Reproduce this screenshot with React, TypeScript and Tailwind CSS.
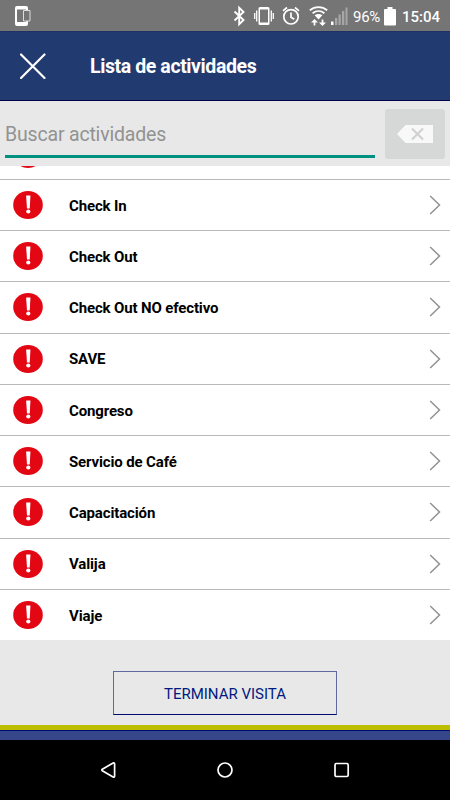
const ACTIVITIES = [
  "",
  "Check In",
  "Check Out",
  "Check Out NO efectivo",
  "SAVE",
  "Congreso",
  "Servicio de Café",
  "Capacitación",
  "Valija",
  "Viaje",
];

function StatusBar() {
  return (
    <div className="flex h-[31px] shrink-0 items-center bg-[#757575] text-white">
      <svg className="ml-3.5 h-[22px] w-[18px]" viewBox="0 0 18 22" fill="none">
        <path fillRule="evenodd" fill="#fff" d="M3 1h9a2 2 0 0 1 2 2v16a2 2 0 0 1-2 2H3a2 2 0 0 1-2-2V3a2 2 0 0 1 2-2zM3 4.500v12.500h9V4.500z" />
        <path fill="#757575" stroke="#ddd" d="M9.500 5.500h6.500v10.500H9.500z" />
      </svg>
      <div className="flex-1" />

      {/* bluetooth */}
      <svg className="h-[22px] w-[14px]" viewBox="0 0 14 22" fill="none" stroke="#fff" strokeWidth="1.900">
        <path d="M2.500 6.500l9 8.500-4.300 4.300V2.700L11.500 7l-9 8.500" />
      </svg>
      {/* vibrate */}
      <svg className="ml-2 h-[22px] w-[20px]" viewBox="0 0 20 22" fill="none" stroke="#fff">
        <path fillRule="evenodd" fill="#fff" stroke="none" d="M6 2h8a1.500 1.500 0 0 1 1.500 1.500v15a1.500 1.500 0 0 1-1.500 1.500H6A1.500 1.500 0 0 1 4.500 18.500v-15A1.500 1.500 0 0 1 6 2zM6 4.500v13h8v-13z" />
        <path strokeWidth="1.300" d="M2.700 5.500v11M17.300 5.500v11M.7 8v6M19.300 8v6" />
      </svg>
      {/* alarm */}
      <svg className="ml-2 h-[22px] w-[18px]" viewBox="0 0 18 22" fill="none" stroke="#fff" strokeWidth="1.700">
        <circle cx="9" cy="11.800" r="7.200" />
        <path d="M1 5.800l4-3.300M17 5.800l-4-3.300M9 7.500v4.700l3.300 2" />
      </svg>
      {/* wifi */}
      <svg className="ml-[9px] h-[22px] w-[19px]" viewBox="0 0 19 22" fill="none" stroke="#fff" strokeWidth="1.800">
        <path d="M.8 5.200c5-4.200 12.400-4.200 17.400 0M3.600 8.300c3.500-2.900 8.300-2.900 11.800 0" />
        <path fill="#fff" stroke="none" d="M5.600 10.300c2.300-1.800 5.500-1.800 7.800 0L9.500 14.600z" />
        <path strokeWidth="1.700" d="M5.500 20.500v-4M13.500 14.500v4" />
        <path fill="#fff" stroke="none" d="M5.500 14L9 17.600H2zM13.500 21l3.500-3.600h-7z" />
      </svg>
      {/* signal */}
      <svg className="ml-0.5 h-[22px] w-[18px]" viewBox="0 0 18 22">
        <path fill="#fff" d="M1 16.500h2.500V20H1z" />
        <path fill="#a6a6a6" d="M5 13h2.300v7H5zM8.500 9.500h2.300V20H8.500zM12 6h2.300v14H12zM15.500 2.500h2V20h-2z" />
      </svg>
      <span className="ml-[5px] w-[28px] whitespace-nowrap pt-0.5 text-[15px] leading-5 tracking-[-0.3px]">96%</span>
      {/* battery */}
      <svg className="ml-[3px] h-[20px] w-[12px]" viewBox="0 0 12 20">
        <path fill="#fff" d="M3.500 1h5v2H11a1 1 0 0 1 1 1v14.500a1 1 0 0 1-1 1H1a1 1 0 0 1-1-1V4a1 1 0 0 1 1-1h2.500z" />
      </svg>
      <span className="ml-[6px] mr-[10px] w-[38px] whitespace-nowrap pt-0.5 text-[15px] font-medium leading-5">15:04</span>
    </div>
  );
}

function Header() {
  return (
    <header className="flex h-[70px] shrink-0 items-center border-y border-t-[#1c3268] border-b-[#00004d] bg-[#213a70] text-white">
      <svg className="ml-5 h-[26px] w-[26px]" viewBox="0 0 26 26" stroke="#fff" strokeWidth="2.200" strokeLinecap="round">
        <path d="M1 1.500l23.500 23.500M24.500 1.500L1 25" />
      </svg>
      <h1 className="ml-11 pt-0.5 text-[19.5px] font-bold tracking-[-0.4px]">Lista de actividades</h1>
    </header>
  );
}

function SearchBar() {
  return (
    <div className="flex h-[65px] shrink-0 gap-2.5 px-[5px] pt-2">
      <div className="flex h-[49px] flex-1 items-center border-b-[3px] border-[#009180] pt-[5px] text-[19.5px] tracking-[-0.18px] text-[#929292]">
        Buscar actividades
      </div>
      <button className="flex h-[50px] w-[60px] items-center justify-center rounded-[3px] bg-[#d6d8d7]">
        <svg className="h-[18px] w-[36px]" viewBox="0 0 36 18">
          <path fill="#f8f8f8" d="M0 9L8.500 0H36v18H8.500z" />
          <path stroke="#d0d2d1" strokeWidth="2.200" d="M15 3.500l11 11M26 3.500l-11 11" />
        </svg>
      </button>
    </div>
  );
}

function ActivityRow({ name }: { name: string }) {
  return (
    <li className="flex h-[51.25px] shrink-0 items-center border-t border-[#b9b9b9] bg-white">
      <svg className="ml-[13px] h-[28px] w-[30px]" viewBox="0 0 30 28">
        <ellipse cx="15" cy="14" rx="14.800" ry="14" fill="#e30613" />
        <path fill="#fff" d="M13.200 4.500h4.200v1.500l-.7 11.500h-2.700l-.8-11.500z" />
        <ellipse cx="15.300" cy="20.500" rx="2.100" ry="1.900" fill="#fff" />
      </svg>
      <span className="ml-[26px] flex-1 pt-0.5 text-[15px] font-bold tracking-[-0.14px] text-black">{name}</span>
      <svg className="mr-[9px] h-5 w-3" viewBox="0 0 12 20" fill="none" stroke="#929292" strokeWidth="1.500">
        <path d="M1.200 1l9.300 9-9.300 9" />
      </svg>
    </li>
  );
}

function NavBar() {
  return (
    <nav className="flex h-[60px] shrink-0 items-center justify-center gap-[99px] bg-black">
      <svg className="h-[18px] w-[18px]" viewBox="0 0 18 18" fill="none" stroke="#fff" strokeWidth="1.700" strokeLinejoin="round">
        <path d="M3.300 8.300l10.800-6.200q1.500-.7 1.500 1v11.800q0 1.700-1.500 1L3.300 9.700q-1-.7 0-1.400z" />
      </svg>
      <svg className="h-[18px] w-[18px]" viewBox="0 0 18 18" fill="none" stroke="#fff" strokeWidth="1.700">
        <circle cx="9" cy="9" r="7" />
      </svg>
      <svg className="h-[18px] w-[18px]" viewBox="0 0 18 18" fill="none" stroke="#fff" strokeWidth="1.700">
        <rect x="2" y="2.500" width="13.200" height="13" rx="1.500" />
      </svg>
    </nav>
  );
}

export default function App() {
  return (
    <div className="flex h-[800px] w-[450px] flex-col overflow-hidden bg-[#e8e8e8] font-['Roboto',sans-serif]">
      <StatusBar />
      <Header />
      <SearchBar />
      <ul className="flex h-[474px] shrink-0 flex-col justify-end overflow-hidden bg-white">
        {ACTIVITIES.map((name) => (
          <ActivityRow key={name} name={name} />
        ))}
      </ul>
      <div className="flex h-[85px] shrink-0 justify-center pt-[31px]">
        <button className="h-11 w-[224px] border border-[#60699f] border-b-[#000b70] pt-0.5 text-[15px] text-[#001a80]">
          TERMINAR VISITA
        </button>
      </div>
      <div className="h-[5px] shrink-0 bg-[#bebe00]" />
      <div className="h-2.5 shrink-0 border-t border-[#000b70] bg-[#36468a]" />
      <NavBar />
    </div>
  );
}
